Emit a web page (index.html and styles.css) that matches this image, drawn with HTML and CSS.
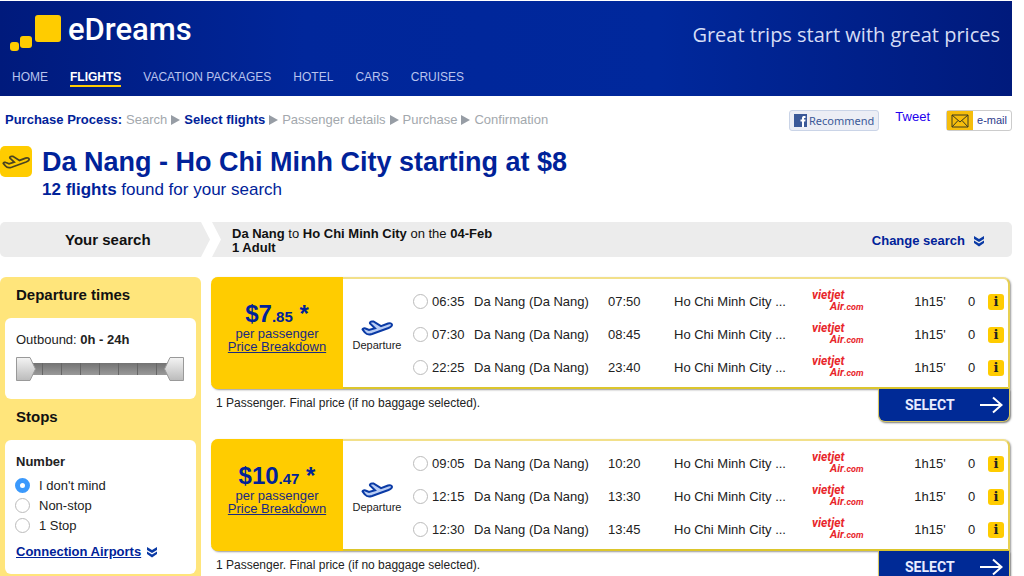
FILE: index.html
```html
<!DOCTYPE html>
<html lang="en">
<head>
    <meta charset="UTF-8">
    <meta name="viewport" content="width=device-width, initial-scale=1.0">
    <title>eDreams - Select flights</title>
    <link rel="stylesheet" href="styles.css">
</head>
<body>
    <svg class="sprite" aria-hidden="true">
        <symbol id="plane" viewBox="0 0 32 18">
            <path d="M1.500 10.500 C1.500 9.500 3.500 9 4.500 9.500 L8 11 L14 9.200 L9 4.500 C8.500 3.500 9.500 2.500 11 2.500 H12.500 L20 7.200 L27 4.500 C29 3.800 31 4.500 31 5.800 C31 7 29.500 8.200 27.500 9 L11 15 C8 16 5.500 15.500 4 13.500 Z"/>
        </symbol>
        <symbol id="chevrons" viewBox="0 0 12 12">
            <path d="M1 1 L6 4 L11 1 V4 L6 7 L1 4 Z M1 5.500 L6 8.500 L11 5.500 V8 L6 11.500 L1 8 Z"/>
        </symbol>
        <symbol id="arrow" viewBox="0 0 24 18">
            <path d="M1 9 H22 M14 1.500 L22.500 9 L14 16.500"/>
        </symbol>
    </svg>

    <header class="header">
        <div class="header-top">
            <a class="logo" href="#">
                <svg width="52" height="38" viewBox="0 0 52 38" aria-hidden="true">
                    <rect x="25" y="2" width="26" height="27" rx="3"/>
                    <rect x="10" y="23" width="12" height="12" rx="3"/>
                    <rect x="0" y="29" width="9" height="9" rx="3"/>
                </svg>
                <span>eDreams</span>
            </a>
            <p class="slogan">Great trips start with great prices</p>
        </div>
        <nav class="nav">
            <a href="#">HOME</a>
            <a href="#" class="active">FLIGHTS</a>
            <a href="#">VACATION PACKAGES</a>
            <a href="#">HOTEL</a>
            <a href="#">CARS</a>
            <a href="#">CRUISES</a>
        </nav>
    </header>

    <div class="topbar">
        <ol class="steps">
            <li class="steps-title">Purchase Process:</li>
            <li>Search</li>
            <li class="arrow current">Select flights</li>
            <li class="arrow">Passenger details</li>
            <li class="arrow">Purchase</li>
            <li class="arrow">Confirmation</li>
        </ol>
        <div class="share">
            <button type="button" class="recommend">
                <svg width="13" height="13" viewBox="0 0 13 13" aria-hidden="true">
                    <rect width="13" height="13" fill="#3b5998"/>
                    <path d="M8 13 V7.500 H6.500 V5.500 H8 V4 C8 2.500 9 2 10 2 H11.500 V4 H10.500 C10 4 10 4.200 10 4.600 V5.500 H11.500 L11.300 7.500 H10 V13 Z" fill="#fff"/>
                </svg>
                Recommend
            </button>
            <a class="tweet" href="#">Tweet</a>
            <button type="button" class="email">
                <span class="email-icon">
                    <svg width="18" height="14" viewBox="0 0 18 14" aria-hidden="true">
                        <path d="M1 1 H17 V13 H1 Z M1 1 L9 8 L17 1 M1 13 L7 6.500 M17 13 L11 6.500"/>
                    </svg>
                </span>
                <span class="email-text">e-mail</span>
            </button>
        </div>
    </div>

    <div class="title">
        <span class="title-icon"><svg width="28" height="16" aria-hidden="true"><use href="#plane"/></svg></span>
        <div>
            <h1>Da Nang - Ho Chi Minh City starting at $8</h1>
            <p><b>12 flights</b> found for your search</p>
        </div>
    </div>

    <div class="search">
        <div class="search-label">Your search</div>
        <div class="search-info">
            <p><b>Da Nang</b> to <b>Ho Chi Minh City</b> on the <b>04-Feb</b><br><b>1 Adult</b></p>
            <a href="#">Change search <svg width="12" height="12" aria-hidden="true"><use href="#chevrons"/></svg></a>
        </div>
    </div>

    <div class="content">
        <aside class="filters">
            <h2>Departure times</h2>
            <div class="box box-times">
                <p>Outbound: <b>0h - 24h</b></p>
                <div class="slider">
                    <input type="range" class="from" min="0" max="24" value="0" aria-label="Outbound from">
                    <input type="range" class="to" min="0" max="24" value="24" aria-label="Outbound to">
                </div>
            </div>
            <h2>Stops</h2>
            <div class="box box-stops">
                <h3>Number</h3>
                <label><input type="radio" name="stops" checked> I don't mind</label>
                <label><input type="radio" name="stops"> Non-stop</label>
                <label><input type="radio" name="stops"> 1 Stop</label>
                <div class="airports">
                    <a href="#">Connection Airports</a>
                    <svg width="12" height="12" aria-hidden="true"><use href="#chevrons"/></svg>
                </div>
            </div>
        </aside>

        <main class="results">
            <section class="result">
                <div class="card">
                    <div class="price">
                        <p class="amount">$7<small>.85</small> *</p>
                        <p>per passenger</p>
                        <a href="#">Price Breakdown</a>
                    </div>
                    <div class="way">
                        <svg width="32" height="18" aria-hidden="true"><use href="#plane"/></svg>
                        <span>Departure</span>
                    </div>
                    <table class="flights">
                        <tr>
                            <td class="pick"><input type="radio" name="flight1" id="f1"></td>
                            <td class="time"><label for="f1">06:35</label></td>
                            <td class="from">Da Nang (Da Nang)</td>
                            <td class="arrive">07:50</td>
                            <td>Ho Chi Minh City ...</td>
                            <td class="airline"><span>vietjet</span><span>Air<small>.com</small></span></td>
                            <td class="length">1h15'</td>
                            <td class="stops">0</td>
                            <td class="info"><button type="button">i</button></td>
                        </tr>
                        <tr>
                            <td class="pick"><input type="radio" name="flight1" id="f2"></td>
                            <td class="time"><label for="f2">07:30</label></td>
                            <td class="from">Da Nang (Da Nang)</td>
                            <td class="arrive">08:45</td>
                            <td>Ho Chi Minh City ...</td>
                            <td class="airline"><span>vietjet</span><span>Air<small>.com</small></span></td>
                            <td class="length">1h15'</td>
                            <td class="stops">0</td>
                            <td class="info"><button type="button">i</button></td>
                        </tr>
                        <tr>
                            <td class="pick"><input type="radio" name="flight1" id="f3"></td>
                            <td class="time"><label for="f3">22:25</label></td>
                            <td class="from">Da Nang (Da Nang)</td>
                            <td class="arrive">23:40</td>
                            <td>Ho Chi Minh City ...</td>
                            <td class="airline"><span>vietjet</span><span>Air<small>.com</small></span></td>
                            <td class="length">1h15'</td>
                            <td class="stops">0</td>
                            <td class="info"><button type="button">i</button></td>
                        </tr>
                    </table>
                </div>
                <div class="result-footer">
                    <p>1 Passenger. Final price (if no baggage selected).</p>
                    <button type="button" class="select">SELECT <svg width="24" height="18" aria-hidden="true"><use href="#arrow"/></svg></button>
                </div>
            </section>

            <section class="result">
                <div class="card">
                    <div class="price">
                        <p class="amount">$10<small>.47</small> *</p>
                        <p>per passenger</p>
                        <a href="#">Price Breakdown</a>
                    </div>
                    <div class="way">
                        <svg width="32" height="18" aria-hidden="true"><use href="#plane"/></svg>
                        <span>Departure</span>
                    </div>
                    <table class="flights">
                        <tr>
                            <td class="pick"><input type="radio" name="flight2" id="f4"></td>
                            <td class="time"><label for="f4">09:05</label></td>
                            <td class="from">Da Nang (Da Nang)</td>
                            <td class="arrive">10:20</td>
                            <td>Ho Chi Minh City ...</td>
                            <td class="airline"><span>vietjet</span><span>Air<small>.com</small></span></td>
                            <td class="length">1h15'</td>
                            <td class="stops">0</td>
                            <td class="info"><button type="button">i</button></td>
                        </tr>
                        <tr>
                            <td class="pick"><input type="radio" name="flight2" id="f5"></td>
                            <td class="time"><label for="f5">12:15</label></td>
                            <td class="from">Da Nang (Da Nang)</td>
                            <td class="arrive">13:30</td>
                            <td>Ho Chi Minh City ...</td>
                            <td class="airline"><span>vietjet</span><span>Air<small>.com</small></span></td>
                            <td class="length">1h15'</td>
                            <td class="stops">0</td>
                            <td class="info"><button type="button">i</button></td>
                        </tr>
                        <tr>
                            <td class="pick"><input type="radio" name="flight2" id="f6"></td>
                            <td class="time"><label for="f6">12:30</label></td>
                            <td class="from">Da Nang (Da Nang)</td>
                            <td class="arrive">13:45</td>
                            <td>Ho Chi Minh City ...</td>
                            <td class="airline"><span>vietjet</span><span>Air<small>.com</small></span></td>
                            <td class="length">1h15'</td>
                            <td class="stops">0</td>
                            <td class="info"><button type="button">i</button></td>
                        </tr>
                    </table>
                </div>
                <div class="result-footer">
                    <p>1 Passenger. Final price (if no baggage selected).</p>
                    <button type="button" class="select">SELECT <svg width="24" height="18" aria-hidden="true"><use href="#arrow"/></svg></button>
                </div>
            </section>
        </main>
    </div>
</body>
</html>
```
FILE: styles.css
```css
* {
    box-sizing: border-box;
}
body {
    margin: 0;
    padding: 1px 12px 0 0;
    background: #fff;
    color: #222;
    font-family: "Liberation Sans", Arial, sans-serif;
    font-size: 13px;
}
h1, h2, h3, p, ol {
    margin: 0;
    padding: 0;
}
button {
    font-family: inherit;
    cursor: pointer;
}
.sprite {
    display: none;
}

/* header */
.header {
    height: 95px;
    background: linear-gradient(to right, #001a7c, #00269a 30%, #00289c 65%, #001a7c);
}
.header-top {
    display: flex;
    justify-content: space-between;
    height: 64px;
    padding: 12px 12px 0 10px;
}
.logo {
    display: flex;
    gap: 6px;
    color: #fff;
    font-family: Roboto, sans-serif;
    font-size: 31px;
    font-weight: 500;
    line-height: 34px;
    text-decoration: none;
}
.logo svg {
    fill: #ffcc00;
}
.slogan {
    color: #d5dcf5;
    font-family: "Open Sans", sans-serif;
    font-size: 20px;
    line-height: 44px;
}
.nav {
    display: flex;
    gap: 22px;
    padding-left: 12px;
    font-size: 12px;
}
.nav a {
    color: #b9c3ee;
    line-height: 24px;
    text-decoration: none;
}
.nav .active {
    height: 22px;
    border-bottom: 2px solid #ffcc00;
    color: #fff;
    font-weight: bold;
}

/* purchase steps and share buttons */
.topbar {
    display: flex;
    justify-content: space-between;
    height: 46px;
    padding: 14px 0 0 5px;
}
.steps {
    display: flex;
    align-items: flex-start;
    gap: 4px;
    color: #a3a8ad;
    line-height: 20px;
    list-style: none;
}
.steps-title, .steps .current {
    color: #002299;
    font-weight: bold;
}
.steps .arrow {
    display: flex;
    align-items: center;
    gap: 4px;
}
.steps .arrow::before {
    content: "";
    border: 5px solid transparent;
    border-left: 9px solid #979da5;
    border-right: 0;
}
.share {
    display: flex;
    align-items: flex-start;
    gap: 16px;
}
.recommend {
    display: flex;
    align-items: center;
    gap: 2px;
    height: 21px;
    padding: 0 4px;
    border: 1px solid #cad4e7;
    border-radius: 3px;
    background: #eceef5;
    color: #3b5998;
    font-family: "Noto Sans", sans-serif;
    font-size: 11px;
}
.tweet {
    color: #2200ee;
    line-height: 14px;
    text-decoration: none;
}
.email {
    display: flex;
    height: 21px;
    padding: 0;
    border: 1px solid #ccc;
    border-radius: 3px;
    background: #fff;
    color: #2b3a8c;
    font-size: 11px;
    line-height: 19px;
}
.email-icon {
    display: flex;
    align-items: center;
    height: 19px;
    padding: 0 4px;
    background: #f5bd0c;
}
.email-icon svg {
    fill: none;
    stroke: #3b3a20;
}
.email-text {
    padding: 0 4px;
}

/* title */
.title {
    display: flex;
    gap: 10px;
    height: 80px;
    padding-top: 4px;
    color: #002299;
}
.title-icon {
    display: flex;
    align-items: center;
    justify-content: center;
    width: 32px;
    height: 31px;
    border-radius: 5px;
    background: #ffcc00;
}
.title-icon svg {
    fill: none;
    stroke: #4a4420;
    stroke-width: 2;
}
.title h1 {
    font-size: 27px;
    line-height: 32px;
}
.title p {
    font-size: 17px;
    line-height: 24px;
}

/* search summary */
.search {
    display: flex;
    gap: 2px;
    height: 35px;
}
.search-label {
    width: 210px;
    padding-left: 65px;
    border-radius: 5px 0 0 5px;
    background: #ececec;
    clip-path: polygon(0 0, 201px 0, 100% 50%, 201px 100%, 0 100%);
    color: #111;
    font-size: 15px;
    font-weight: bold;
    line-height: 36px;
}
.search-info {
    display: flex;
    flex: 1;
    align-items: center;
    justify-content: space-between;
    padding: 2px 27px 0 20px;
    border-radius: 0 5px 5px 0;
    background: #ececec;
    clip-path: polygon(0 0, 100% 0, 100% 100%, 0 100%, 9px 50%);
}
.search-info p {
    color: #111;
    line-height: 14px;
}
.search-info a {
    display: flex;
    align-items: center;
    gap: 8px;
    color: #002299;
    font-weight: bold;
    text-decoration: none;
}
.search svg, .airports svg {
    fill: #0a3aa5;
}

/* filters */
.content {
    display: flex;
    gap: 10px;
    padding-top: 20px;
}
.filters {
    width: 201px;
    padding: 0 5px 5px;
    border-radius: 6px;
    background: #ffe57b;
}
.filters h2 {
    height: 41px;
    padding-left: 11px;
    color: #111;
    font-size: 15px;
    line-height: 36px;
}
.box {
    padding: 12px 11px;
    border-radius: 6px;
    background: #fff;
}
.box-times {
    height: 81px;
}
.box-times p {
    line-height: 20px;
}
.slider {
    position: relative;
    height: 24px;
    margin-top: 7px;
}
.slider::before {
    content: "";
    position: absolute;
    top: 6px;
    left: 8px;
    right: 8px;
    height: 12px;
    background: repeating-linear-gradient(to right, transparent 0 18px, #666 18px 19px), linear-gradient(#737373, #999);
}
.slider input {
    position: absolute;
    top: 0;
    left: 0;
    width: 168px;
    height: 24px;
    margin: 0;
    appearance: none;
    background: none;
    pointer-events: none;
}
.slider input::-webkit-slider-thumb {
    appearance: none;
    width: 20px;
    height: 24px;
    pointer-events: auto;
}
.slider .from::-webkit-slider-thumb {
    background: url("data:image/svg+xml,%3Csvg xmlns='http://www.w3.org/2000/svg' width='20' height='24'%3E%3ClinearGradient id='g' x2='0' y2='1'%3E%3Cstop stop-color='%23f4f4f4'/%3E%3Cstop offset='1' stop-color='%23bbb'/%3E%3C/linearGradient%3E%3Cpath d='M.5.5H14L19.500 12 14 23.500H.5Z' fill='url(%23g)' stroke='%23999'/%3E%3C/svg%3E");
}
.slider .to::-webkit-slider-thumb {
    background: url("data:image/svg+xml,%3Csvg xmlns='http://www.w3.org/2000/svg' width='20' height='24'%3E%3ClinearGradient id='g' x2='0' y2='1'%3E%3Cstop stop-color='%23f4f4f4'/%3E%3Cstop offset='1' stop-color='%23bbb'/%3E%3C/linearGradient%3E%3Cpath d='M19.500.5H6L.5 12 6 23.500H19.500Z' fill='url(%23g)' stroke='%23999'/%3E%3C/svg%3E");
}
.box-stops h3 {
    margin-bottom: 3px;
    font-size: 13px;
    line-height: 20px;
}
.box-stops label {
    display: flex;
    align-items: center;
    gap: 9px;
    height: 20px;
}
input[type="radio"] {
    appearance: none;
    width: 15px;
    height: 15px;
    margin: 0;
    border: 1px solid #bbb;
    border-radius: 50%;
    background: #fff;
}
input[type="radio"]:checked {
    border: 5px solid #3b99fc;
}
.box-stops input[type="radio"] {
    margin-left: -1px;
}
.airports {
    display: flex;
    align-items: center;
    gap: 5px;
    padding-top: 7px;
    line-height: 20px;
}
.airports a {
    color: #002299;
    font-weight: bold;
}

/* results */
.results {
    flex: 1;
    padding-right: 2px;
}
.result {
    margin-bottom: 17px;
}
.card {
    display: flex;
    height: 112px;
    border: 2px solid #f2e08a;
    border-right-color: #e8d050;
    border-bottom-color: #dcc62c;
    border-left: 0;
    border-radius: 7px 7px 0 7px;
    background: #fff;
    box-shadow: 1px 1px 2px #999;
}
.price {
    width: 132px;
    margin: -2px 0;
    padding-top: 27px;
    border-radius: 7px 0 0 7px;
    background: #ffcc00;
    color: #1a2a80;
    line-height: 13px;
    text-align: center;
}
.price a {
    color: inherit;
}
.amount {
    color: #002299;
    font-size: 24px;
    font-weight: bold;
    line-height: 20px;
}
.amount small {
    font-size: 15px;
}
.way {
    display: flex;
    flex-direction: column;
    align-items: center;
    gap: 2px;
    width: 68px;
    padding-top: 40px;
    font-size: 11px;
}
.way svg {
    fill: #b9cdf5;
    stroke: #0a3aa5;
    stroke-width: 2;
}
.flights {
    flex: 1;
    margin: 6px 0 3px;
    border-collapse: collapse;
    table-layout: fixed;
}
.flights td {
    height: 33px;
    padding: 0;
    white-space: nowrap;
}
.flights .pick {
    width: 21px;
    padding-left: 2px;
}
.flights .pick input {
    display: block;
}
.flights .time {
    width: 42px;
}
.flights .from {
    width: 134px;
}
.flights .arrive {
    width: 66px;
}
.flights .airline {
    width: 87px;
    color: #e8262b;
    font-family: Roboto, sans-serif;
    font-size: 12px;
    font-style: italic;
    font-weight: bold;
    line-height: 11px;
}
.airline span {
    display: block;
}
.airline span + span {
    padding-left: 18px;
    font-size: 11px;
}
.airline small {
    font-size: 9px;
}
.flights .length {
    width: 62px;
    text-align: center;
}
.flights .stops {
    width: 21px;
    text-align: center;
}
.flights .info {
    width: 26px;
    padding-left: 6px;
}
.info button {
    display: block;
    width: 16px;
    height: 16px;
    padding: 0;
    border: 0;
    border-radius: 3px;
    background: #ffcc00;
    color: #222;
    font-family: "DejaVu Serif", serif;
    font-size: 13px;
    font-weight: bold;
    line-height: 16px;
}
.result-footer {
    display: flex;
    justify-content: space-between;
    padding-left: 5px;
}
.result-footer p {
    font-size: 12px;
    line-height: 28px;
}
.select {
    display: flex;
    align-items: center;
    justify-content: space-between;
    width: 132px;
    height: 33px;
    padding: 0 6px 0 26px;
    border: 1px solid #d8c860;
    border-top: 0;
    border-radius: 0 0 7px 7px;
    background: #002a96;
    box-shadow: 1px 1px 2px #777;
    color: #e8ecff;
    font-family: Roboto, sans-serif;
    font-size: 14px;
    font-weight: bold;
}
.select svg {
    fill: none;
    stroke: #fff;
    stroke-width: 2;
}
```
